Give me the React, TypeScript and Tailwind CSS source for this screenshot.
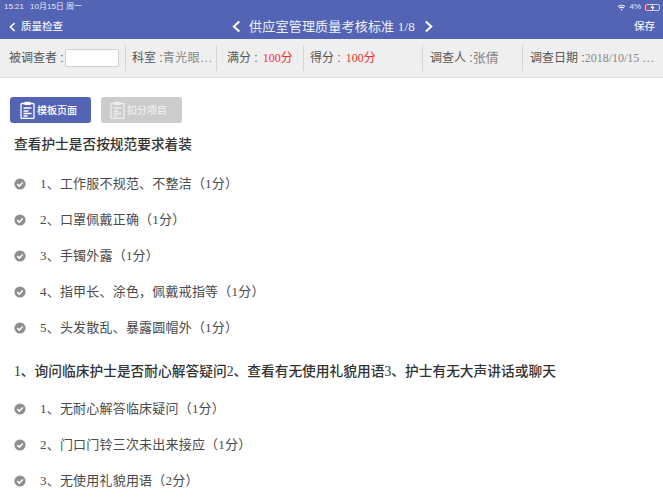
const font = "font-['Liberation_Serif','Noto_Sans_CJK_SC',sans-serif]";
const sans = "font-['Liberation_Sans','Noto_Sans_CJK_SC',sans-serif]";

function Clip({ color }: { color: string }) {
  return (
    <svg width="15" height="18" viewBox="0 0 15 18" fill="none" stroke={color} strokeWidth="1.3">
      <rect x="1" y="2.5" width="13" height="15" rx="1" />
      <rect x="4.5" y="0.8" width="6" height="3.2" fill={color} stroke="none" />
      <path d="M3.5 7h8M3.5 10h5M3.5 12.5h8M3.5 15h4" />
    </svg>
  );
}

function Check() {
  return (
    <svg width="12" height="12" viewBox="0 0 12 12" className="shrink-0">
      <circle cx="6" cy="6" r="5.6" fill="#8f8f8f" />
      <path d="M3.3 6.1l2 2 3.5-3.6" fill="none" stroke="#fff" strokeWidth="1.5" />
    </svg>
  );
}

function Chevron({ right, size = 14 }: { right?: boolean; size?: number }) {
  return (
    <svg width={size * 0.7} height={size} viewBox="0 0 10 14" fill="none" stroke="#fff" strokeWidth="2.2">
      <path d={right ? "M2 1.5l6 5.5-6 5.5" : "M8 1.5L2 7l6 5.5"} />
    </svg>
  );
}

function Row({ text }: { text: string }) {
  return (
    <div className="flex items-center h-[36px] pl-[14px]">
      <Check />
      <span className="ml-[14px] text-[13px] text-[#4a4a4a] tracking-[0.2px]">{text}</span>
    </div>
  );
}

function Cell({ w, border = true, children }: { w: string; border?: boolean; children: React.ReactNode }) {
  return (
    <div className={`${w} h-[26px] flex items-center shrink-0 text-[12px] text-[#555] whitespace-nowrap ${border ? "border-r border-[#d4d4d4]" : ""}`}>
      {children}
    </div>
  );
}

export default function App() {
  return (
    <div className={`${font} w-[663px] h-[497px] overflow-hidden bg-white`}>
      <header className="h-[39px] bg-[#5364b4] text-white flex flex-col">
        <div className={`${sans} h-[14px] flex justify-between items-center pl-[4px] pr-[3px] text-[8px] text-[#e6e8f5]`}>
          <div className="flex gap-[6px]"><span>15:21</span><span>10月15日 周一</span></div>
          <div className="flex items-center gap-[3px]">
            <svg width="9" height="7" viewBox="0 0 10 8" fill="none" stroke="#fff" strokeWidth="1.2">
              <path d="M1 3a6 6 0 018 0M2.5 4.6a4 4 0 015 0" />
              <circle cx="5" cy="6.6" r="0.9" fill="#fff" stroke="none" />
            </svg>
            <span>4%</span>
            <div className="relative w-[15px] h-[7px] border border-[#c9cde6] rounded-[2px] ml-[1px]">
              <div className="w-[1px] h-full bg-[#ef3b3b]" />
              <svg className="absolute left-[4px] top-[-1px]" width="5" height="7" viewBox="0 0 5 7"><path d="M3 0L0.5 4H2.3L1.8 7 4.5 3H2.6z" fill="#fff" /></svg>
            </div>
          </div>
        </div>
        <div className="flex-1 flex items-center relative">
          <div className={`${sans} flex items-center pl-[9px] gap-[5px] text-[10.5px]`}>
            <Chevron size={10} />
            <span className="font-medium text-[#eceef8]">质量检查</span>
          </div>
          <div className="absolute left-[232px] top-0 h-full flex items-center">
            <Chevron size={13} />
            <span className="ml-[8px] text-[13px] tracking-[0.2px] text-[#eef0fa]">
              <span className={sans}>供应室管理质量考核标准</span> 1/8
            </span>
            <span className="ml-[9px]"><Chevron right size={13} /></span>
          </div>
          <span className={`${sans} ml-auto mr-[8px] text-[10.5px] font-medium text-[#eceef8]`}>保存</span>
        </div>
      </header>

      <div className="h-[39px] bg-[#efefef] border-b border-[#dcdcdc] flex items-center">
        <Cell w="w-[126px] pl-[9px]">
          <span className={sans}>被调查者 :</span>
          <span className="ml-[1px] w-[54px] h-[18px] bg-white border border-[#cfcfcf] rounded-[2px]" />
        </Cell>
        <Cell w="w-[91px] pl-[6px]">
          <span className={sans}>科室 :</span><span className="text-[#888] tracking-[0.5px]">青光眼…</span>
        </Cell>
        <Cell w="w-[87px] pl-[10px]">
          <span className={sans}>满分 :</span><span className="ml-[5px] text-[#f03030]">100分</span>
        </Cell>
        <Cell w="w-[119px] pl-[6px]">
          <span className={sans}>得分 :</span><span className="ml-[5px] text-[#f03030]">100分</span>
        </Cell>
        <Cell w="w-[100px] pl-[7px]">
          <span className={sans}>调查人 :</span><span className="text-[#888] text-[13px]">张倩</span>
        </Cell>
        <Cell w="w-[140px] pl-[7px]" border={false}>
          <span className={sans}>调查日期 :</span><span className="text-[#888]">2018/10/15 …</span>
        </Cell>
      </div>

      <div className="pt-[19px]">
        <div className={`${sans} flex gap-[10px] pl-[10px]`}>
          <div className="w-[81px] h-[26px] rounded-[3px] bg-[#5364b4] text-white text-[10px] font-medium flex items-center pl-[10px] gap-[2px]">
            <Clip color="#fff" />模板页面
          </div>
          <div className="w-[81px] h-[26px] rounded-[3px] bg-[#cccccc] text-[#eeeeee] text-[10px] font-medium flex items-center pl-[9px] gap-[2px]">
            <Clip color="#eeeeee" />扣分项目
          </div>
        </div>
        <div className={`${sans} mt-[13px] pl-[14px] text-[13.7px] font-medium text-[#333] leading-[18px]`}>查看护士是否按规范要求着装</div>
        <div className="mt-[12px]">
          <Row text="1、工作服不规范、不整洁（1分）" />
          <Row text="2、口罩佩戴正确（1分）" />
          <Row text="3、手镯外露（1分）" />
          <Row text="4、指甲长、涂色，佩戴戒指等（1分）" />
          <Row text="5、头发散乱、暴露圆帽外（1分）" />
        </div>
        <div className="mt-[17px] pl-[14px] text-[13.7px] font-medium text-[#333] leading-[18px] tracking-[0.03px]">1、询问临床护士是否耐心解答疑问2、查看有无使用礼貌用语3、护士有无大声讲话或聊天</div>
        <div className="mt-[10px]">
          <Row text="1、无耐心解答临床疑问（1分）" />
          <Row text="2、门口门铃三次未出来接应（1分）" />
          <Row text="3、无使用礼貌用语（2分）" />
        </div>
      </div>
    </div>
  );
}
